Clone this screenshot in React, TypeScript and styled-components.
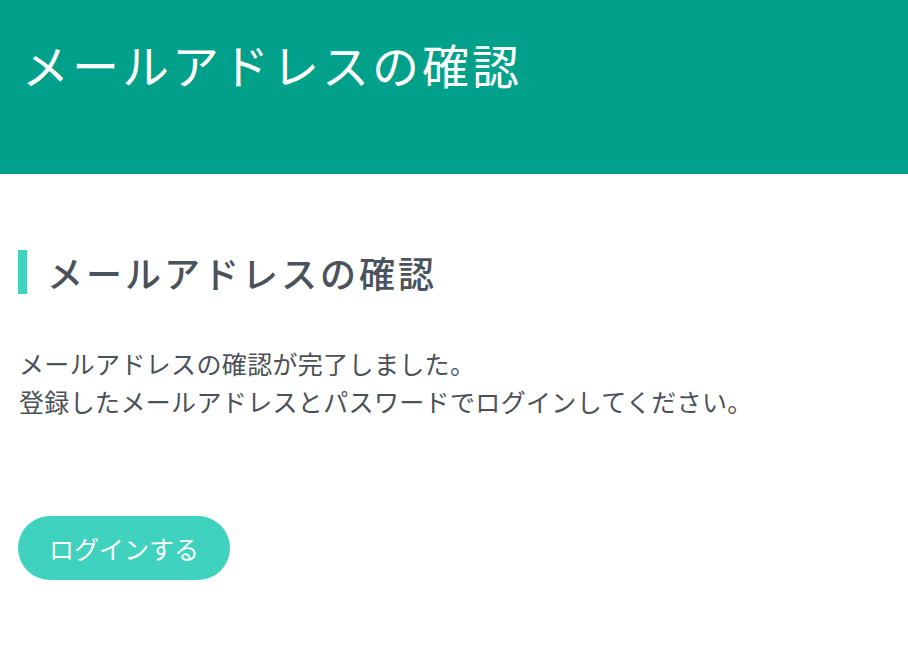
import React from "react";
import styled, { createGlobalStyle } from "styled-components";

const Global = createGlobalStyle`
  html, body { margin: 0; padding: 0; background: #ffffff; }
  body { font-family: "Noto Sans CJK JP", "Noto Sans", sans-serif; }
`;

const Page = styled.div`
  display: flex;
  flex-direction: column;
  min-height: 667px;
`;

const Header = styled.header`
  height: 174px;
  background: #00a08a;
  box-sizing: border-box;
  padding: 29px 0 0 22px;
`;

const HeaderTitle = styled.h1`
  margin: 0;
  font-size: 47px;
  line-height: 70px;
  font-weight: 400;
  letter-spacing: 3px;
  color: #ffffff;
`;

const Main = styled.main`
  padding: 76px 18px 0 18px;
  display: flex;
  flex-direction: column;
`;

const SectionTitle = styled.h2`
  margin: 0;
  display: flex;
  align-items: center;
  gap: 20px;
  font-size: 36px;
  line-height: 44px;
  font-weight: 500;
  letter-spacing: 3px;
  color: #4a525b;
`;

const Accent = styled.span`
  width: 9px;
  height: 44px;
  background: #3fd2bf;
  flex: none;
`;

const Message = styled.p`
  margin: 50px 0 0 1px;
  font-size: 25px;
  line-height: 38px;
  letter-spacing: 0.35px;
  color: #4a5058;
`;

const LoginButton = styled.button`
  margin-top: 96px;
  align-self: flex-start;
  width: 212px;
  height: 64px;
  border: none;
  border-radius: 32px;
  background: #3fd2bf;
  color: #ffffff;
  font-family: inherit;
  font-size: 25px;
  font-weight: 400;
  cursor: pointer;
`;

export default function App() {
  return (
    <>
      <Global />
      <Page>
        <Header>
          <HeaderTitle>メールアドレスの確認</HeaderTitle>
        </Header>
        <Main>
          <SectionTitle>
            <Accent />
            メールアドレスの確認
          </SectionTitle>
          <Message>
            メールアドレスの確認が完了しました。
            <br />
            登録したメールアドレスとパスワードでログインしてください。
          </Message>
          <LoginButton>ログインする</LoginButton>
        </Main>
      </Page>
    </>
  );
}
